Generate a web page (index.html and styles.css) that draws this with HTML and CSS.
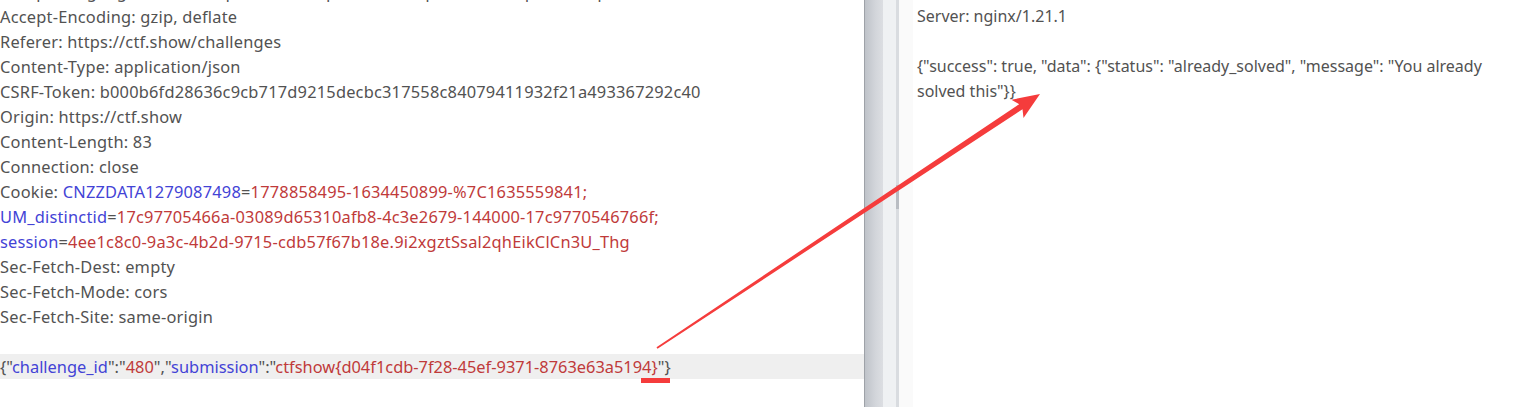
FILE: index.html
```html
<!DOCTYPE html>
<html lang="en">
<head>
    <meta charset="UTF-8">
    <title>Repeater</title>
    <link rel="stylesheet" href="styles.css">
</head>
<body>
<div class="pane request">
    <div class="text">
        <div class="line">Accept-Language: zh-CN,zh;q=0.8,zh-TW;q=0.7,zh-HK;q=0.5,en-US;q=0.3,en;q=0.2</div>
        <div class="line">Accept-Encoding: gzip, deflate</div>
        <div class="line">Referer: https://ctf.show/challenges</div>
        <div class="line">Content-Type: application/json</div>
        <div class="line">CSRF-Token: b000b6fd28636c9cb717d9215decbc317558c84079411932f21a493367292c40</div>
        <div class="line">Origin: https://ctf.show</div>
        <div class="line">Content-Length: 83</div>
        <div class="line">Connection: close</div>
        <div class="line">Cookie: <span class="key">CNZZDATA1279087498</span>=<span class="val">1778858495-1634450899-%7C1635559841;</span></div>
        <div class="line"><span class="key">UM_distinctid</span>=<span class="val">17c97705466a-03089d65310afb8-4c3e2679-144000-17c9770546766f;</span></div>
        <div class="line"><span class="key">session</span>=<span class="val">4ee1c8c0-9a3c-4b2d-9715-cdb57f67b18e.9i2xgztSsal2qhEikClCn3U_Thg</span></div>
        <div class="line">Sec-Fetch-Dest: empty</div>
        <div class="line">Sec-Fetch-Mode: cors</div>
        <div class="line">Sec-Fetch-Site: same-origin</div>
        <div class="line">&nbsp;</div>
        <div class="line current">{"<span class="key">challenge_id</span>":"<span class="val">480</span>","<span class="key">submission</span>":"<span class="val">ctfshow{d04f1cdb-7f28-45ef-9371-8763e63a5194}</span>"}</div>
    </div>
</div>
<div class="split">
    <div class="bar"></div>
    <div class="track"><div class="thumb"></div></div>
    <div class="gap"></div>
</div>
<div class="pane response">
    <div class="text">
        <div class="line">Server: nginx/1.21.1</div>
        <div class="line">&nbsp;</div>
        <div class="line">{"success": true, "data": {"status": "already_solved", "message": "You already</div>
        <div class="line">solved this"}}</div>
    </div>
</div>

<svg class="marks" width="1529" height="407" viewBox="0 0 1529 407">
    <polygon fill="#f53c3c" points="657.5,348.8 1022.5,109.2 1023.5,118.1 1040,94 1011.4,99.7 1019.2,104.2 656.5,347.2"/>
    <rect x="641" y="378" width="29" height="5" fill="#f53c3c"/>
</svg>
</body>
</html>
```

FILE: styles.css
```css
html, body {
    margin: 0;
    height: 100%;
    overflow: hidden;
}
body {
    display: flex;
    background-color: #fff;
    font-family: "Noto Sans", "Open Sans", sans-serif;
    font-size: 16px;
    color: #525252;
}
.pane {
    overflow: hidden;
}
.request {
    width: 864px;
    flex: none;
    font-size: 16.4px;
    letter-spacing: 0.2px;
}
.request .text {
    margin-top: -21px;
}
.response {
    flex: 1;
    padding-left: 4px;
}
.response .text {
    margin-top: 4px;
}
.line {
    height: 25px;
    line-height: 25px;
    white-space: nowrap;
}
.line.current {
    background-color: #efefef;
    letter-spacing: 0;
}
.key {
    color: #4343d6;
}
.val {
    color: #c03a3a;
}

.split {
    display: flex;
    width: 49px;
    flex: none;
}
.split .bar {
    width: 18px;
    border-left: 1px solid #9ea2a8;
    background: linear-gradient(to right, #bfc3c9, #d3d6db 60%, #dcdee2);
}
.split .track {
    width: 13px;
    background-color: #eff1f3;
    border-right: 3px solid #d9dce0;
    position: relative;
}
.split .thumb {
    position: absolute;
    right: -3px;
    top: 185px;
    width: 3px;
    height: 24px;
    background-color: #b9bdc3;
}
.split .gap {
    width: 14px;
    background-color: #fafafa;
}

.marks {
    position: absolute;
    top: 0;
    left: 0;
    pointer-events: none;
}
```
